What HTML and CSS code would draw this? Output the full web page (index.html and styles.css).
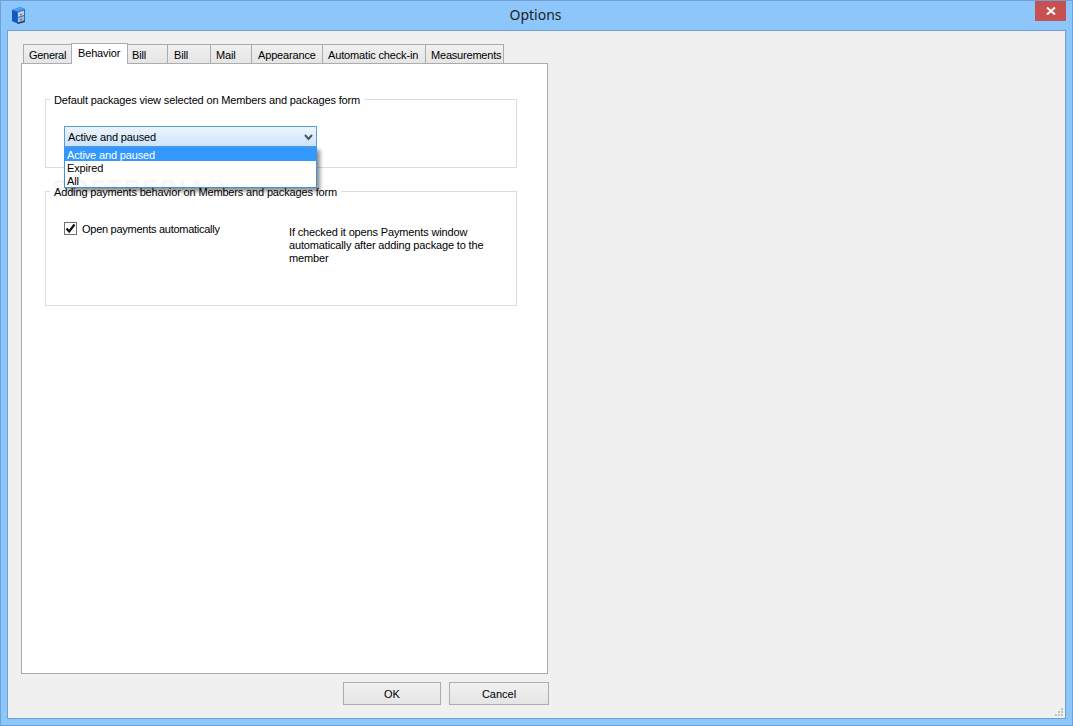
FILE: index.html
```html
<!DOCTYPE html>
<html lang="en">
<head>
<meta charset="utf-8">
<title>Options</title>
<link rel="stylesheet" href="styles.css">
</head>
<body>
<div class="window">
  <header class="titlebar">
    <svg class="app-icon" width="14" height="17" viewBox="0 0 14 17">
      <path d="M0 3 L8 0 L13 2 L13 14 L6 16.500 L0 14 Z" fill="#1c6ee0"/>
      <path d="M0 3 L8 0 L13 2 L6 4.500 Z" fill="#4aa0f0"/>
      <path d="M0 3 L5 5 L5 16 L0 14 Z" fill="#1257c4"/>
      <path d="M6 5.500 L12 3.500 L12 8 L6 10 Z" fill="#c9ced6"/>
      <path d="M6 11 L12 9 L12 13.500 L6 15.500 Z" fill="#aeb5be"/>
      <path d="M8 7.500 L10 6.800 L10 7.800 L8 8.500 Z" fill="#59616b"/>
      <path d="M8 12.500 L10 11.800 L10 12.800 L8 13.500 Z" fill="#59616b"/>
      <path d="M5 16 L13 13.500 L13 15 L6 17 Z" fill="#2c3a4d"/>
    </svg>
    <h1 class="title">Options</h1>
    <button class="close" type="button" aria-label="Close">
      <svg width="10" height="8" viewBox="0 0 10 8"><path d="M1 0.500 L9 7.500 M9 0.500 L1 7.500" stroke="#fff" stroke-width="2" fill="none"/></svg>
    </button>
  </header>
  <main class="client">
    <div class="dialog">
      <nav class="tabs">
        <span class="tab tab-general">General</span>
        <span class="tab tab-active">Behavior</span>
        <span class="tab tab-bill1">Bill</span>
        <span class="tab tab-bill2">Bill</span>
        <span class="tab tab-mail">Mail</span>
        <span class="tab tab-appearance">Appearance</span>
        <span class="tab tab-checkin">Automatic check-in</span>
        <span class="tab tab-measure">Measurements</span>
      </nav>
      <section class="page">
        <fieldset class="group group-view">
          <legend class="legend">Default packages view selected on Members and packages form</legend>
          <div class="combo-wrap">
            <div class="combo">
              <span>Active and paused</span>
              <svg class="chevron" width="9" height="7" viewBox="0 0 9 7"><path d="M1 1 L4.500 5 L8 1" stroke="#4a5560" stroke-width="2" fill="none"/></svg>
            </div>
            <ul class="popup">
              <li class="opt opt-selected">Active and paused</li>
              <li class="opt">Expired</li>
              <li class="opt">All</li>
            </ul>
          </div>
        </fieldset>
        <fieldset class="group group-pay">
          <legend class="legend">Adding payments behavior on Members and packages form</legend>
          <div class="pay-row">
            <label class="check">
              <span class="box">
                <svg width="11" height="11" viewBox="0 0 11 11"><path d="M1.500 5.500 L4.200 8.500 L9.500 1.500" stroke="#111" stroke-width="2.200" fill="none"/></svg>
              </span>
              Open payments automatically
            </label>
            <p class="hint">If checked it opens Payments window automatically after adding package to the member</p>
          </div>
        </fieldset>
        <div class="watermark">SOFTPEDIA®</div>
      </section>
      <footer class="actions">
        <button class="btn btn-ok" type="button">OK</button>
        <button class="btn btn-cancel" type="button">Cancel</button>
      </footer>
    </div>
    <div class="grip">
      <svg width="8" height="8" viewBox="0 0 8 8" fill="#c0c0c0">
        <rect x="6" y="0" width="2" height="2"/>
        <rect x="3" y="3" width="2" height="2"/><rect x="6" y="3" width="2" height="2"/>
        <rect x="0" y="6" width="2" height="2"/><rect x="3" y="6" width="2" height="2"/><rect x="6" y="6" width="2" height="2"/>
      </svg>
    </div>
  </main>
</div>
</body>
</html>
```
FILE: styles.css
```css
* { box-sizing: border-box; }
html, body { margin: 0; padding: 0; }
body {
  width: 1073px;
  height: 726px;
  overflow: hidden;
  font-family: "Liberation Sans", Arial, sans-serif;
  font-size: 11px;
  letter-spacing: -0.15px;
  color: #000;
}
.window {
  width: 1073px;
  height: 726px;
  background: #8cc6fb;
  border: 1px solid #6f9fd3;
  display: flex;
  flex-direction: column;
}
.titlebar {
  height: 29px;
  flex: none;
  display: flex;
  align-items: flex-start;
}
.app-icon { margin: 6px 0 0 11px; flex: none; }
.title {
  flex: 1;
  margin: 4px 0 0;
  padding-left: 10px;
  text-align: center;
  font: 400 14px/20px "Noto Sans", "Open Sans", sans-serif;
  letter-spacing: 0;
  color: #1e1e1e;
}
.close {
  width: 31px;
  height: 20px;
  margin: 0 6px 0 0;
  padding: 0;
  border: 0;
  background: #c75050;
  display: flex;
  align-items: center;
  justify-content: center;
}
.client {
  flex: 1;
  margin: 0 6px 6px 6px;
  background: #f0f0f0;
  border: 1px solid #6f9fd3;
  position: relative;
  padding: 11px 0 0 13px;
}
.dialog { width: 528px; }
.tabs {
  display: flex;
  height: 21px;
  padding-left: 2px;
  align-items: flex-end;
  position: relative;
  z-index: 1;
}
.tab {
  height: 19px;
  border: 1px solid #acacac;
  border-bottom: 0;
  margin-right: -1px;
  padding: 3px 0 0 5px;
  line-height: 14px;
  background: linear-gradient(#f0f0f0, #e5e5e5);
  white-space: nowrap;
}
.tab-general { width: 49px; letter-spacing: -0.3px; }
.tab-active {
  width: 57px;
  height: 21px;
  background: #fff;
  padding: 2px 0 0 6px;
  margin-bottom: -1px;
  position: relative;
  z-index: 2;
}
.tab-bill1 { width: 41px; padding-left: 4px; }
.tab-bill2 { width: 44px; padding-left: 6px; }
.tab-mail { width: 42px; }
.tab-appearance { width: 72px; padding-left: 6px; }
.tab-checkin { width: 104px; }
.tab-measure { width: 79px; letter-spacing: -0.2px; }
.page {
  width: 527px;
  height: 611px;
  background: #fff;
  border: 1px solid #acacac;
  padding: 28px 0 0 23px;
  position: relative;
}
.group {
  width: 472px;
  margin: 0;
  padding: 0 0 0 18px;
  border: 1px solid #dcdcdc;
  min-width: 0;
  position: relative;
}
.group-view { height: 76px; }
.group-pay { height: 122px; margin-top: 16px; }
.legend {
  margin-left: -14px;
  padding: 2px 4px 0;
  line-height: 12px;
  white-space: nowrap;
}
.combo-wrap { position: relative; width: 253px; margin-top: 20px; z-index: 3; }
.combo {
  height: 21px;
  border: 1px solid #569de5;
  background: linear-gradient(#ecf4fc, #cde4fa);
  padding: 1px 0 0 3px;
  line-height: 18px;
  display: flex;
  justify-content: space-between;
  align-items: center;
}
.chevron { margin-right: 3px; }
.popup {
  list-style: none;
  margin: 0;
  padding: 0;
  position: absolute;
  left: 0;
  top: 21px;
  width: 253px;
  height: 41px;
  background: #fff;
  border: 1px solid #3f93e6;
  border-top: 0;
  box-shadow: 3px 3px 4px rgba(0, 0, 0, .45);
}
.opt { height: 13px; line-height: 15px; padding-left: 2px; }
.opt-selected { height: 14px; line-height: 16px; background: #3399ff; color: #fff; }
.pay-row { display: flex; align-items: flex-start; padding-top: 24px; }
.check { width: 225px; display: flex; align-items: flex-start; gap: 5px; line-height: 14px; letter-spacing: -0.27px; flex: none; }
.box {
  width: 13px;
  height: 13px;
  border: 1px solid #707070;
  background: #fff;
  display: flex;
  align-items: center;
  justify-content: center;
  flex: none;
}
.hint { width: 205px; margin: 4px 0 0; line-height: 13px; }
.watermark {
  position: absolute;
  left: 30px;
  top: 111px;
  font-size: 24px;
  font-weight: 700;
  letter-spacing: 2px;
  color: #000;
  opacity: .03;
  pointer-events: none;
  z-index: 4;
}
.actions {
  display: flex;
  justify-content: flex-end;
  gap: 8px;
  margin-top: 8px;
  width: 528px;
}
.btn {
  height: 23px;
  padding: 0;
  font: inherit;
  letter-spacing: 0;
  color: #000;
  border: 1px solid #acacac;
  background: linear-gradient(#f0f0f0, #e5e5e5);
}
.btn-ok { width: 98px; }
.btn-cancel { width: 100px; }
.grip { position: absolute; right: 2px; bottom: 2px; line-height: 0; }
```
